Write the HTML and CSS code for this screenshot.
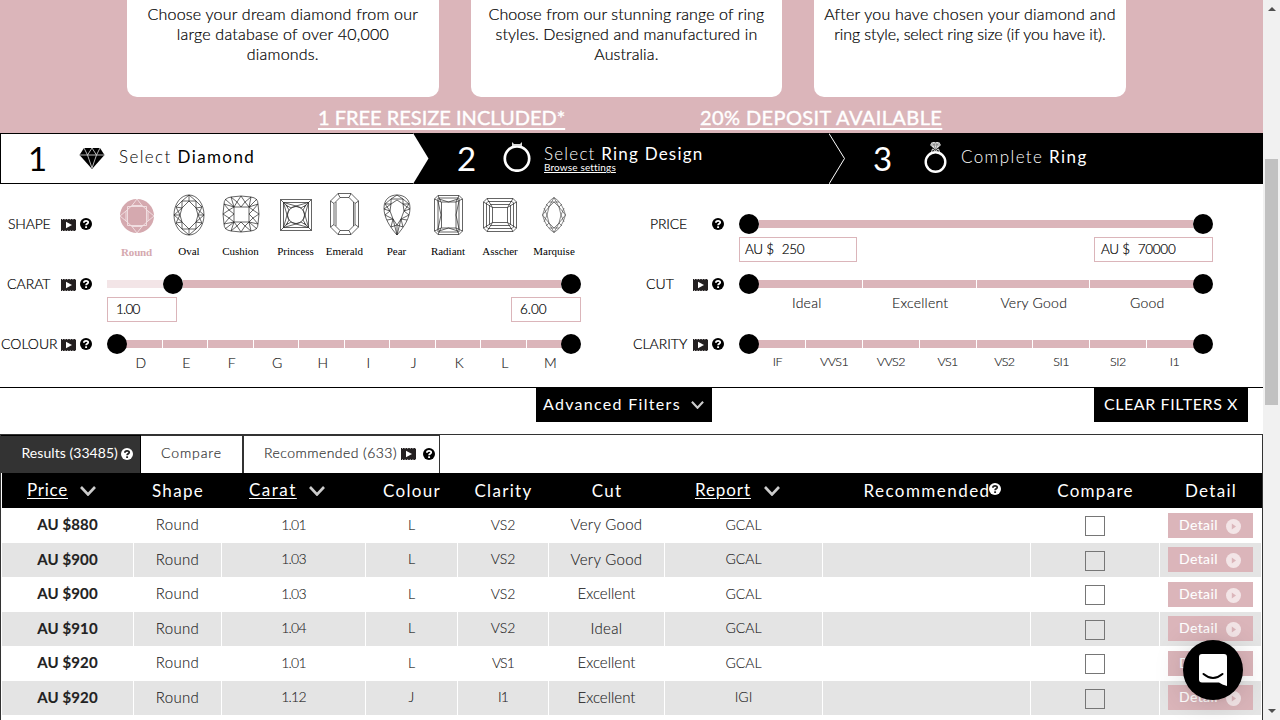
FILE: index.html
```html
<!DOCTYPE html>
<html lang="en">
<head>
<meta charset="utf-8">
<title>Design your ring</title>
<link rel="stylesheet" href="styles.css">
</head>
<body>
<svg class="defs" aria-hidden="true">
  <symbol id="help" viewBox="0 0 12 12"><circle class="disc" cx="6" cy="6" r="6"/><path class="mark" d="M3.9 4.7C3.9 2.3 8.2 2.3 8.2 4.5C8.2 5.9 6.1 5.8 6.1 7.3" fill="none" stroke-width="1.8"/><path class="mark" d="M6.1 8.3V10" stroke-width="1.9"/></symbol>
  <symbol id="video" viewBox="0 0 15 12"><path fill="#231f20" d="M0 0H15V12H0Z"/><path stroke="#fff" stroke-width=".7" stroke-dasharray="1 1.6" d="M1 .4H15M1 11.6H15"/><path fill="#fff" d="M5 2.8L11 6L5 9.2Z"/></symbol>
  <symbol id="chev" viewBox="0 0 16 10"><path d="M1 1L8 8.5L15 1" fill="none" stroke="#ccc" stroke-width="2.6"/></symbol>
  <symbol id="play" viewBox="0 0 15 15"><circle cx="7.5" cy="7.5" r="7.5" fill="#f3e5e7"/><path d="M5.8 4.4L10 7.5L5.8 10.6Z" fill="#dbb5ba"/></symbol>
</svg>
<div class="page">
<main class="main">
  <section class="hero">
    <div class="cards">
      <p class="card">Choose your dream diamond from our<br>large database of over 40,000<br>diamonds.</p>
      <p class="card card-style">Choose from our stunning range of ring<br>styles. Designed and manufactured in<br>Australia.</p>
      <p class="card">After you have chosen your diamond and<br><span class="tight">ring style, select ring size (if you have it).</span></p>
    </div>
    <div class="promos"><a class="promo-resize">1 FREE RESIZE INCLUDED*</a><a class="promo-deposit">20% DEPOSIT AVAILABLE</a></div>
  </section>

  <nav class="steps">
    <div class="step step-one">
      <span class="num">1</span>
      <svg class="gem" viewBox="0 0 26 22"><path d="M5 1H21L25.500 8L13 22L.5 8Z"/><path d="M0 8H26M5 1L8.500 8L13 1L17.500 8L21 1M8.500 8L13 21L17.500 8" fill="none" stroke="#ccc" stroke-width=".9"/></svg>
      <span class="step-text"><span class="thin">Select</span> Diamond</span>
    </div>
    <div class="step step-two">
      <svg class="arrow-solid" viewBox="0 0 16 51"><path d="M0 0L15.500 25.500L0 51Z" fill="#fff"/></svg>
      <span class="num">2</span>
      <svg class="ring" viewBox="0 0 28 31"><circle cx="14" cy="17.500" r="12.200" fill="none" stroke="#fff" stroke-width="2.700"/><path d="M9 5V1L11 3H17L19 1V5Z" fill="#ddd"/></svg>
      <span class="step-text stacked"><span class="title"><span class="thin">Select</span> Ring Design</span><a class="browse">Browse settings</a></span>
    </div>
    <div class="step step-three">
      <svg class="arrow-line" viewBox="0 0 16 51"><path d="M0 .5L15.500 25.500L0 51" fill="none" stroke="#fff"/></svg>
      <span class="num">3</span>
      <svg class="ring-stone" viewBox="0 0 23 32"><circle cx="11.500" cy="21" r="9.800" fill="none" stroke="#fff" stroke-width="2.400"/><path d="M8 1H15L17 4L11.500 9L6 4Z" fill="#ddd"/><path d="M6 4H17M8 1L10 4L11.500 1L13 4L15 1M10 4L11.500 9L13 4" fill="none" stroke="#555" stroke-width=".5"/><path d="M7.500 11L8.500 8L11.500 10L14.500 8L15.500 11" fill="none" stroke="#ddd"/></svg>
      <span class="step-text"><span class="thin">Complete</span> Ring</span>
    </div>
  </nav>

  <section class="filters">
    <div class="col">
      <div class="filter">
        <div class="label"><span class="name n-shape">SHAPE</span><svg class="vid"><use href="#video"/></svg><svg class="help"><use href="#help"/></svg></div>
        <div class="shapes">
          <div class="shape s1 active"><svg width="34" height="34" viewBox="0 0 34 34"><circle cx="17" cy="17" r="17" fill="#d5a9af"/><g fill="none" stroke="#f3e3e5" stroke-width=".9"><path d="M12 6.500H22L28 12V22L22 27.500H12L6 22V12ZM7.500 7.500H26.500V26.500H7.500ZM0 17L6 12M0 17L6 22M34 17L28 12M34 17L28 22M17 0L12 6.500M17 0L22 6.500M17 34L12 27.500M17 34L22 27.500"/></g></svg><span>Round</span></div>
          <div class="shape s2"><svg width="32" height="42" viewBox="0 0 32 42"><g class="facet"><ellipse cx="16" cy="21" rx="15" ry="20"/><path d="M16 7L23 14L25 21L23 28L16 35L9 28L7 21L9 14ZM16 1L9 7L9 14L3 13L7 21L3 29L9 28L9 35L16 41L23 35V28L29 29L25 21L29 13L23 14V7ZM9 7L16 7L23 7M9 35H23M9 7L3 13M23 7L29 13M9 35L3 29M23 35L29 29M1 21H7M25 21H31M16 1V7M16 35V41M9 14L1 21L9 28M23 14L31 21L23 28"/></g></svg><span>Oval</span></div>
          <div class="shape s3"><svg width="38" height="38" viewBox="0 0 38 38"><g class="facet"><path d="M9 2Q19 0 29 2Q36 3 36 9Q38 19 36 29Q36 35 29 36Q19 38 9 36Q2 35 2 29Q0 19 2 9Q2 3 9 2ZM12 12H27V27H12ZM12 12L3 4M27 12L35 4M27 27L35 34M12 27L3 34M12 12L9 2M12 12L2 9M27 12L29 2M27 12L36 9M27 27L36 29M27 27L29 36M12 27L9 36M12 27L2 29M9 2L15 7L19 12L23 7L29 2M36 9L31 15L27 19L31 23L36 29M29 36L23 31L19 27L15 31L9 36M2 29L7 23L12 19L7 15L2 9M15 7L19 1L23 7M31 15L37 19L31 23M23 31L19 37L15 31M7 23L1 19L7 15M12 12L15 7M27 12L23 7M27 12L31 15M27 27L31 23M27 27L23 31M12 27L15 31M12 27L7 23M12 12L7 15"/></g></svg><span>Cushion</span></div>
          <div class="shape s4"><svg width="32" height="32" viewBox="0 0 32 32"><g class="facet"><path d="M.5.5H31.500V31.500H.5ZM3.500 3.500H28.500V28.500H3.500ZM.5.5L8 8M31.500.5L24 8M31.500 31.500L24 24M.5 31.500L8 24M3.500 3.500L16 7L28.500 3.500L25 16L28.500 28.500L16 25L3.500 28.500L7 16ZM6 6L11 9L16 7L21 9L26 6L23 11L25 16L23 21L26 26L21 23L16 25L11 23L6 26L9 21L7 16L9 11Z"/><circle cx="16" cy="16" r="8.500"/></g></svg><span>Princess</span></div>
          <div class="shape s5"><svg width="29" height="42" viewBox="0 0 29 42"><g class="facet"><path d="M8 .5H21L28.500 8V34L21 41.500H8L.5 34V8ZM10 4.500H19L25 10.500V31.500L19 37.500H10L4 31.500V10.500ZM6 9V33M23.500 9V33M8 .5L10 4.500M21 .5L19 4.500M28.500 8L25 10.500M28.500 34L25 31.500M21 41.500L19 37.500M8 41.500L10 37.500M.5 34L4 31.500M.5 8L4 10.500"/></g></svg><span>Emerald</span></div>
          <div class="shape s6"><svg width="28" height="42" viewBox="0 0 28 42"><g class="facet"><path d="M14 41C7 33 1 24 1 14C1 5 7 1 14 1S27 5 27 14C27 24 21 33 14 41ZM14 6L20 10L21 17L18 25L14 31L10 25L7 17L8 10ZM14 1L8 5L8 10L2 10L7 17L2 21L10 25L8 33L14 31L20 33L18 25L26 21L21 17L26 10L20 10V5ZM8 5H20M8 5L2 10M20 5L26 10M1 15L8 10M27 15L20 10M1 15L7 17M27 15L21 17M4 26L10 25M24 26L18 25M14 31V41M10 25L14 41L18 25"/></g></svg><span>Pear</span></div>
          <div class="shape s7"><svg width="29" height="40" viewBox="0 0 29 40"><g class="facet"><path d="M4 .5H25L28.500 4V36L25 39.500H4L.5 36V4ZM4 3H25V37H4ZM7.500 7H22V33H7.500ZM4 .5L7 7M25 .5L22 7M25 39.500L22 33M4 39.500L7 33M.5 4L7 7M28.500 4L22 7M.5 36L7 33M28.500 36L22 33M4 6L7 20L4 34M25 6L22 20L25 34M5 4L14.500 7L24 4M5 36L14.500 33L24 36"/></g></svg><span>Radiant</span></div>
          <div class="shape s8"><svg width="34" height="34" viewBox="0 0 34 34"><g class="facet"><path d="M4 .5H30L33.500 4V30L30 33.500H4L.5 30V4ZM5 3.500H29L30.500 5V29L29 30.500H5L3.500 29V5ZM7.500 6.500H26.500L27.500 7.500V26.500L26.500 27.500H7.500L6.500 26.500V7.500ZM9.500 9.500H24.500V24.500H9.500ZM4 .5L9.500 9.500M.5 4L9.500 9.500M30 .5L24.500 9.500M33.500 4L24.500 9.500M33.500 30L24.500 24.500M30 33.500L24.500 24.500M4 33.500L9.500 24.500M.5 30L9.500 24.500"/></g></svg><span>Asscher</span></div>
          <div class="shape s9"><svg width="24" height="36" viewBox="0 0 24 36"><g class="facet soft"><path d="M12 .5Q20 5 23.500 18Q20 31 12 35.500Q4 31 .5 18Q4 5 12 .5ZM12 5L17 10L19 18L17 26L12 31L7 26L5 18L7 10ZM12 .5L7 10L.5 18L7 26L12 35.500L17 26L23.500 18L17 10ZM7 10L4 7M17 10L20 7M17 26L20 29M7 26L4 29M5 18L2 11M5 18L2 25M19 18L22 11M19 18L22 25M7 5L12 5L17 5M7 31H17"/></g></svg><span>Marquise</span></div>
        </div>
      </div>
      <div class="filter">
        <div class="label"><span class="name n-carat">CARAT</span><svg class="vid"><use href="#video"/></svg><svg class="help"><use href="#help"/></svg></div>
        <div class="control">
          <div class="slider carat"><i class="rest"></i><i class="knob"></i><i class="bar"></i><i class="knob"></i></div>
          <div class="inputs"><span class="input small one">1.00</span><span class="input small">6.00</span></div>
        </div>
      </div>
      <div class="filter">
        <div class="label"><span class="name n-colour">COLOUR</span><svg class="vid"><use href="#video"/></svg><svg class="help"><use href="#help"/></svg></div>
        <div class="control">
          <div class="slider"><i class="knob"></i><div class="segs"><i></i><i></i><i></i><i></i><i></i><i></i><i></i><i></i><i></i><i></i></div><i class="knob"></i></div>
          <div class="ticks colours"><b>D</b><b>E</b><b>F</b><b>G</b><b>H</b><b>I</b><b>J</b><b>K</b><b>L</b><b>M</b></div>
        </div>
      </div>
    </div>
    <div class="col col-right">
      <div class="filter">
        <div class="label"><span class="name n-price">PRICE</span><svg class="help"><use href="#help"/></svg></div>
        <div class="control">
          <div class="slider"><i class="knob"></i><i class="bar"></i><i class="knob"></i></div>
          <div class="inputs"><span class="input big"><em>AU $</em>250</span><span class="input big wide"><em>AU $</em>70000</span></div>
        </div>
      </div>
      <div class="filter">
        <div class="label"><span class="name n-cut">CUT</span><svg class="vid"><use href="#video"/></svg><svg class="help"><use href="#help"/></svg></div>
        <div class="control">
          <div class="slider"><i class="knob"></i><div class="segs"><i></i><i></i><i></i><i></i></div><i class="knob"></i></div>
          <div class="ticks cuts"><b>Ideal</b><b>Excellent</b><b>Very Good</b><b>Good</b></div>
        </div>
      </div>
      <div class="filter">
        <div class="label"><span class="name n-clarity">CLARITY</span><svg class="vid"><use href="#video"/></svg><svg class="help"><use href="#help"/></svg></div>
        <div class="control">
          <div class="slider"><i class="knob"></i><div class="segs"><i></i><i></i><i></i><i></i><i></i><i></i><i></i><i></i></div><i class="knob"></i></div>
          <div class="ticks clarities"><b>IF</b><b>VVS1</b><b>VVS2</b><b>VS1</b><b>VS2</b><b>SI1</b><b>SI2</b><b>I1</b></div>
        </div>
      </div>
    </div>
  </section>

  <div class="actions">
    <button class="advanced"><span>Advanced Filters</span><svg><use href="#chev"/></svg></button>
    <button class="clear">CLEAR FILTERS X</button>
  </div>

  <section class="results">
    <div class="tabs">
      <div class="tab current"><span>Results (33485)</span><svg class="help light"><use href="#help"/></svg></div>
      <div class="tab compare-tab"><span>Compare</span></div>
      <div class="tab rec-tab"><span>Recommended (633)</span><svg class="vid"><use href="#video"/></svg><svg class="help"><use href="#help"/></svg></div>
    </div>
    <div class="row head">
      <div class="sort sort-price"><u>Price</u><svg><use href="#chev"/></svg></div><div>Shape</div><div class="sort sort-carat"><u>Carat</u><svg><use href="#chev"/></svg></div><div>Colour</div><div>Clarity</div><div>Cut</div><div class="sort sort-report"><u>Report</u><svg><use href="#chev"/></svg></div><div class="rec"><span>Recommended</span><svg class="help light"><use href="#help"/></svg></div><div>Compare</div><div>Detail</div>
    </div>
    <div class="row"><div class="price">AU $880</div><div class="word">Round</div><div class="figure">1.01</div><div>L</div><div>VS2</div><div class="word">Very Good</div><div>GCAL</div><div></div><div><i class="check"></i></div><div><a class="detail">Detail<svg><use href="#play"/></svg></a></div></div>
    <div class="row alt"><div class="price">AU $900</div><div class="word">Round</div><div class="figure">1.03</div><div>L</div><div>VS2</div><div class="word">Very Good</div><div>GCAL</div><div></div><div><i class="check"></i></div><div><a class="detail">Detail<svg><use href="#play"/></svg></a></div></div>
    <div class="row"><div class="price">AU $900</div><div class="word">Round</div><div class="figure">1.03</div><div>L</div><div>VS2</div><div class="word narrow">Excellent</div><div>GCAL</div><div></div><div><i class="check"></i></div><div><a class="detail">Detail<svg><use href="#play"/></svg></a></div></div>
    <div class="row alt"><div class="price">AU $910</div><div class="word">Round</div><div class="figure">1.04</div><div>L</div><div>VS2</div><div class="word">Ideal</div><div>GCAL</div><div></div><div><i class="check"></i></div><div><a class="detail">Detail<svg><use href="#play"/></svg></a></div></div>
    <div class="row"><div class="price">AU $920</div><div class="word">Round</div><div class="figure">1.01</div><div>L</div><div class="figure vs1">VS1</div><div class="word narrow">Excellent</div><div>GCAL</div><div></div><div><i class="check"></i></div><div><a class="detail">Detail<svg><use href="#play"/></svg></a></div></div>
    <div class="row alt"><div class="price">AU $920</div><div class="word">Round</div><div class="figure">1.12</div><div>J</div><div class="figure">I1</div><div class="word narrow">Excellent</div><div>IGI</div><div></div><div><i class="check"></i></div><div><a class="detail">Detail<svg><use href="#play"/></svg></a></div></div>
    <div class="row"><div></div><div></div><div></div><div></div><div></div><div></div><div></div><div></div><div></div><div></div></div>
  </section>
</main>
<aside class="scrollbar"><i class="up"></i><i class="thumb"></i><i class="down"></i></aside>
</div>
<button class="chat" aria-label="Chat"><svg width="28" height="32" viewBox="0 0 28 32"><path d="M3 0H25Q28 0 28 3V32Q23 30.500 20 28.500H3Q0 28.500 0 25.500V3Q0 0 3 0Z" fill="#fff"/><path d="M4.500 20Q14 28 23.500 20" fill="none" stroke="#000" stroke-width="2" stroke-linecap="round"/></svg></button>
</body>
</html>
```
FILE: styles.css
```css
* { box-sizing: border-box; }
body { margin: 0; width: 1280px; height: 720px; overflow: hidden; background: #fff; font-family: Lato, "Liberation Sans", sans-serif; color: #000; }
svg { display: block; flex: none; }
i, em, b { font-style: normal; font-weight: inherit; }
button { border: 0; font-family: inherit; padding: 0; }
.defs { display: none; }
.page { display: flex; height: 720px; }
.main { width: 1263px; flex: none; height: 720px; overflow: hidden; }

.hero { height: 133px; background: #dbb5ba; }
.cards { display: grid; grid-template-columns: repeat(3, 311.6px); gap: 32px; padding-left: 127px; height: 97px; }
.card { margin: 0; padding-top: 4px; background: #fff; border-radius: 0 0 10px 10px; text-align: center; font-size: 16px; letter-spacing: .22px; line-height: 20px; font-weight: 300; white-space: nowrap; -webkit-text-stroke: .2px; }
.card-style { letter-spacing: .1px; }
.tight { letter-spacing: -.1px; }
.promos { display: flex; padding: 7px 0 0 318px; color: #fff; font-size: 20px; line-height: 26px; white-space: nowrap; -webkit-text-stroke: .4px; }
.promos a { text-decoration: underline; text-decoration-thickness: 2px; text-underline-offset: 3px; }
.promo-resize { width: 382px; }
.promo-deposit { letter-spacing: .4px; }

.steps { display: grid; grid-template-columns: 413px 416px 434px; grid-template-rows: 51px; height: 51px; background: #000; color: #fff; }
.step { display: flex; align-items: center; white-space: nowrap; }
.num { font-size: 33px; line-height: 49px; margin-top: -1px; }
.step-text { font-size: 17px; line-height: 18px; letter-spacing: 1.4px; padding-bottom: 3px; }
.thin { font-weight: 300; }
.step-one { background: #fff; color: #000; border: 1px solid #000; border-right: 0; padding-left: 27px; }
.step-one .num { width: 51px; }
.gem { width: 26px; height: 22px; margin: -2px 14px 0 0; }
.arrow-solid, .arrow-line { width: 16px; height: 51px; }
.step-two .num { margin-left: 28px; width: 46px; }
.ring { width: 28px; height: 31px; margin: -5px 13px 0 0; }
.stacked { padding-bottom: 0; }
.title { display: block; letter-spacing: 1.22px; }
.browse { display: block; font-size: 10px; line-height: 9px; letter-spacing: .15px; text-decoration: underline; }
.step-three .num { margin-left: 28px; width: 51px; }
.ring-stone { width: 23px; height: 32px; margin: -4px 14px 0 0; }

.filters { display: grid; grid-template-columns: 632px 631px; height: 204px; padding-top: 30px; border-bottom: 1px solid #000; }
.filter { display: flex; height: 60px; }
.label { display: flex; align-items: center; height: 20px; width: 107px; padding-right: 15px; font-size: 14px; font-weight: 300; white-space: nowrap; }
.name { margin-right: auto; padding-bottom: 1px; -webkit-text-stroke: .2px; }
.n-shape { padding-left: 8px; letter-spacing: -.2px; }
.n-carat { padding-left: 7px; }
.n-colour { padding-left: 1px; }
.vid { width: 15px; height: 12px; margin: 2px 4px 0 0; }
.help { width: 12px; height: 12px; --disc: #000; --mark: #fff; }
.light { --disc: #fff; --mark: #222; }
.disc { fill: var(--disc); }
.mark { stroke: var(--mark); }
.n-price { padding-left: 18px; letter-spacing: -.15px; }
.n-cut { padding-left: 14px; }
.n-clarity { padding-left: 1px; }
.control { width: 474px; }
.slider { display: flex; align-items: center; height: 20px; }
.knob { width: 20px; height: 20px; border-radius: 50%; background: #000; flex: none; position: relative; }
.bar { height: 8px; flex: 1; background: #dbb5ba; }
.rest { width: 56px; height: 8px; background: #f3e5e7; }
.segs { display: flex; flex: 1; height: 8px; margin: 0 -10px; }
.segs i { flex: 1; background: #dbb5ba; border-right: 1px solid #fff; }
.segs i:last-child { border-right: 0; }
.inputs { display: flex; justify-content: space-between; padding-top: 3px; }
.input { height: 25px; border: 1px solid #dbb5ba; font-size: 13.500px; line-height: 22px; font-weight: 300; white-space: nowrap; -webkit-text-stroke: .2px; }
.small { width: 70px; padding-left: 8px; }
.one { letter-spacing: -.8px; padding-left: 8px; }
.big { width: 118px; padding-left: 5px; letter-spacing: -.3px; }
.wide { width: 119px; padding-left: 6px; }
.input em { margin-right: 8px; }
.ticks { display: flex; margin: 0 9px 0 11px; font-size: 14px; line-height: 18px; font-weight: 300; text-align: center; color: #222; -webkit-text-stroke: .15px; }
.colours { margin-right: 8px; }
.ticks b { flex: 1 1 0; white-space: nowrap; }
.cuts { letter-spacing: .25px; }
.clarities { font-size: 12.500px; line-height: 15px; letter-spacing: -.5px; margin: 0 10px; }

.shapes { display: grid; grid-template-columns: 60px 45px 58px 52px 46px 58px 45px 59px 49px; margin: -22px 0 0 -.5px; height: 72px; font-family: "Liberation Serif", serif; font-size: 11px; line-height: 12px; text-align: center; }
.shape { display: flex; flex-direction: column; align-items: center; justify-content: space-between; height: 65px; }
.shape span { white-space: nowrap; }
.facet { fill: none; stroke: #222; stroke-width: .7; }
.soft { stroke: #555; }
.s1 svg { margin-top: 7px; }
.s2 svg { margin-top: 2px; }
.s3 svg { margin-top: 3px; }
.s4 svg { margin-top: 7px; }
.s5 svg { margin-top: 1px; }
.s6 svg { margin-top: 2px; }
.s7 svg { margin-top: 3px; }
.s8 svg { margin-top: 6px; }
.s9 svg { margin-top: 5px; }
.active { color: #d5a9af; font-weight: bold; height: 66px; letter-spacing: -.2px; }

.actions { display: flex; height: 46px; padding-left: 536px; }
.actions button { height: 34px; background: #000; color: #fff; font-size: 16px; line-height: 32px; padding-bottom: 2px; letter-spacing: 1.3px; white-space: nowrap; }
.advanced { display: flex; align-items: center; width: 176px; margin-right: 382px; }
.advanced span { padding-left: 7px; width: 155px; text-align: left; }
.advanced svg { width: 13px; height: 8px; margin-top: 2px; }
.actions .clear { width: 154px; letter-spacing: .6px; }

.results { border: 1px solid #333; border-bottom: 0; height: 300px; }
.tabs { display: flex; height: 38px; color: #333; }
.tab { display: flex; align-items: center; height: 38px; white-space: nowrap; border: solid #333; border-width: 1px 1px 0 0; padding-bottom: 3px; }
.tab span { margin-top: -1px; }
.current { width: 140px; background: #333; color: #fff; padding-left: 20.500px; border-color: #000; font-size: 14px; }
.current span { width: 99.500px; letter-spacing: .05px; }
.compare-tab { width: 103px; justify-content: center; border-right-width: 2px; font-weight: 300; font-size: 14px; letter-spacing: .9px; -webkit-text-stroke: .2px; }
.rec-tab { width: 196px; padding-left: 20px; font-weight: 300; font-size: 14px; letter-spacing: .45px; }
.rec-tab span { width: 137px; -webkit-text-stroke: .2px; }
.tab .help { margin-top: 2px; }
.rec-tab .vid { margin: 1px 7px 0 0; }
.row { display: grid; grid-template-columns: 132px 88px 144px 92px 91px 116px 158px 208px 129px 102px; width: 1261px; height: 34.500px; padding-left: 1px; font-size: 14px; font-weight: 300; color: #222; -webkit-text-stroke: .1px; }
.row > div { display: flex; align-items: center; justify-content: center; white-space: nowrap; border-right: 1px solid #fff; padding-bottom: 2px; }
.row .word { font-size: 15px; letter-spacing: .3px; }
.row .narrow { letter-spacing: 0; }
.row .figure { letter-spacing: -.8px; }
.row .vs1 { letter-spacing: -.8px; }
.row .price { font-weight: 700; font-size: 15px; letter-spacing: .1px; }
.alt > div { background: #e4e4e4; }
.head { height: 35px; background: #000; background-clip: content-box; color: #fff; font-size: 17px; font-weight: 400; letter-spacing: 1.3px; -webkit-text-stroke: 0; }
.head > div { border-right: 0; padding-bottom: 1px; }
.head .sort { justify-content: flex-start; padding-bottom: 3px; }
.head .sort svg { width: 16px; height: 10px; margin: 4px 0 0 auto; }
.head .sort-price { padding-left: 25px; padding-right: 38px; letter-spacing: .75px; }
.head .sort-carat { padding-left: 27px; padding-right: 41px; letter-spacing: 1.5px; }
.head .sort-report { padding-left: 30px; padding-right: 43px; letter-spacing: .9px; }
.sort u { text-underline-offset: 2px; text-decoration-thickness: 1px; }
.head .rec { padding-left: 9px; letter-spacing: 1.45px; }
.rec .help { margin: -3px -1px 0 -2px; }
.check { width: 20px; height: 20px; border: 1px solid #767676; margin-top: 4px; }
.row .detail { display: flex; align-items: center; width: 85px; height: 25px; margin-top: 2px; padding-left: 11px; padding-bottom: 2px; background: #dbb5ba; color: #fff; font-weight: 400; letter-spacing: .4px; }
.detail svg { width: 15px; height: 15px; margin: 4px 0 0 8px; }

.scrollbar { width: 17px; flex: none; background: #f1f1f1; display: flex; flex-direction: column; align-items: center; }
.up { border: 4px solid transparent; border-top: 0; border-bottom: 4px solid #505050; margin-top: 7px; }
.thumb { width: 13px; height: 246px; background: #c1c1c1; margin-top: 148px; }
.down { border: 4px solid transparent; border-bottom: 0; border-top: 4px solid #505050; margin: auto 0 7px; }
.chat { position: fixed; left: 1183px; top: 640px; width: 60px; height: 60px; border-radius: 50%; background: #000; display: flex; align-items: center; justify-content: center; box-shadow: 0 1px 6px rgba(0,0,0,.06), 0 2px 32px rgba(0,0,0,.16); }
```
